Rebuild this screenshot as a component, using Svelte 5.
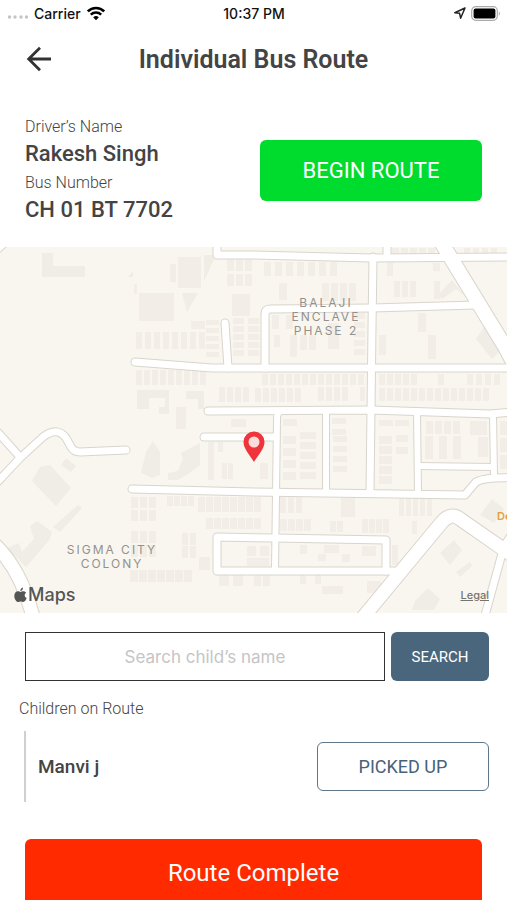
<script lang="ts">
  interface Child { id: number; name: string; pickedUp: boolean; }
  interface Road { d: string; w: number; }
  interface Block { x: number; y: number; w: number; h: number; cols?: number; dx?: number; rows?: number; dy?: number; }

  const driver = { name: 'Rakesh Singh', bus: 'CH 01 BT 7702' };

  let query = $state('');
  let started = $state(false);
  let children: Child[] = $state([{ id: 1, name: 'Manvi j', pickedUp: false }]);

  const roads: Road[] = [
    { d: 'M-6 6L4-3', w: 6 },
    { d: 'M217-6V8L253 8L372 11L512 10', w: 7 },
    { d: 'M387-6V10', w: 7 },
    { d: 'M373 10L372 80L370 246', w: 7 },
    { d: 'M265 121V67Q265 62 270 62L372 61L475 58', w: 7 },
    { d: 'M135 115L212 121H512', w: 7 },
    { d: 'M225 76L228 121', w: 7 },
    { d: 'M208 164L371 163L490 167L512 165', w: 7 },
    { d: 'M204 190H276', w: 7 },
    { d: 'M281 164Q277 165 277 172L275 323', w: 6 },
    { d: 'M326 164V245', w: 6 },
    { d: 'M417 165L418 247', w: 6 },
    { d: 'M493 167L494 229', w: 6 },
    { d: 'M418 219L493 220', w: 6 },
    { d: 'M132 242L254 245L465 248Q470 242 476 235Q485 230 512 231', w: 7 },
    { d: 'M217 290L275 291L386 293V324H217Z', w: 7 },
    { d: 'M386 324H400', w: 7 },
    { d: 'M-6 181L20 210', w: 7 },
    { d: 'M-8 241L20 211L43 190Q57 179 66 191L71 200Q74 205 80 205L126 203', w: 7 },
    { d: 'M-6 297Q22 323 34 374', w: 13 },
    { d: 'M438-10L504 98L518 124', w: 14 },
    { d: 'M360 374L442 275Q451 265 460 272L516 311', w: 13 },
    { d: 'M503 303L484 372', w: 7 },
    { d: 'M502 302L514 284', w: 7 },
  ];

  const blocks: Block[] = [
    { x: 178, y: 10, w: 23, h: 31 },
    { x: 170, y: 17, w: 6, h: 18 },
    { x: 139, y: 46, w: 35, h: 28 },
    { x: 227, y: 12, w: 7, h: 12, cols: 3, dx: 9, rows: 2, dy: 15 },
    { x: 232, y: 47, w: 18, h: 22 },
    { x: 191, y: 74, w: 14, h: 8 },
    { x: 134, y: 37, w: 3, h: 10 },
    { x: 206, y: 73, w: 13, h: 5, rows: 5, dy: 8 },
    { x: 233, y: 71, w: 11, h: 6, cols: 2, dx: 15, rows: 5, dy: 8 },
    { x: 136, y: 85, w: 6, h: 17, cols: 8, dx: 9 },
    { x: 136, y: 123, w: 6, h: 15, cols: 9, dx: 8 },
    { x: 219, y: 140, w: 6, h: 15, cols: 4, dx: 8 },
    { x: 176, y: 160, w: 10, h: 22 },
    { x: 231, y: 172, w: 15, h: 8 },
    { x: 264, y: 15, w: 7, h: 14, cols: 7, dx: 11 },
    { x: 279, y: 36, w: 8, h: 17 },
    { x: 322, y: 36, w: 7, h: 18, cols: 4, dx: 9 },
    { x: 272, y: 68, w: 7, h: 14, cols: 2, dx: 14 },
    { x: 274, y: 88, w: 6, h: 12 },
    { x: 290, y: 88, w: 7, h: 22 },
    { x: 300, y: 88, w: 7, h: 15, cols: 2, dx: 9 },
    { x: 328, y: 76, w: 11, h: 26 },
    { x: 354, y: 66, w: 11, h: 6, rows: 5, dy: 9 },
    { x: 387, y: 15, w: 6, h: 14 },
    { x: 394, y: 34, w: 6, h: 16, cols: 3, dx: 8 },
    { x: 433, y: 16, w: 7, h: 8 },
    { x: 434, y: 34, w: 6, h: 18 },
    { x: 379, y: 88, w: 7, h: 20 },
    { x: 418, y: 66, w: 8, h: 19 },
    { x: 428, y: 88, w: 8, h: 24 },
    { x: 392, y: 1, w: 7, h: 5, cols: 5, dx: 9 },
    { x: 464, y: 1, w: 6, h: 5, cols: 4, dx: 9 },
    { x: 262, y: 127, w: 6, h: 11, cols: 13, dx: 8 },
    { x: 255, y: 141, w: 6, h: 14, cols: 6, dx: 8 },
    { x: 318, y: 140, w: 6, h: 14, cols: 4, dx: 8 },
    { x: 360, y: 140, w: 5, h: 14 },
    { x: 379, y: 127, w: 6, h: 11, cols: 5, dx: 8 },
    { x: 379, y: 141, w: 6, h: 13, cols: 14, dx: 8 },
    { x: 438, y: 127, w: 6, h: 11 },
    { x: 467, y: 127, w: 6, h: 11, cols: 4, dx: 9 },
    { x: 283, y: 172, w: 14, h: 7 },
    { x: 332, y: 171, w: 14, h: 6, cols: 1, rows: 2, dy: 11 },
    { x: 379, y: 173, w: 14, h: 6, cols: 2, dx: 16 },
    { x: 426, y: 174, w: 7, h: 13, cols: 4, dx: 9 },
    { x: 470, y: 174, w: 17, h: 14 },
    { x: 500, y: 174, w: 8, h: 14, rows: 3, dy: 17 },
    { x: 425, y: 189, w: 8, h: 23, cols: 3, dx: 14 },
    { x: 478, y: 190, w: 10, h: 20 },
    { x: 283, y: 189, w: 13, h: 8, rows: 4, dy: 12 },
    { x: 300, y: 185, w: 16, h: 7, rows: 5, dy: 10 },
    { x: 333, y: 189, w: 14, h: 6, rows: 4, dy: 10 },
    { x: 379, y: 189, w: 13, h: 8, rows: 5, dy: 10 },
    { x: 396, y: 188, w: 12, h: 7, rows: 2, dy: 12 },
    { x: 222, y: 216, w: 5, h: 16, cols: 2, dx: 6 },
    { x: 208, y: 195, w: 6, h: 38 },
    { x: 218, y: 195, w: 5, h: 10 },
    { x: 260, y: 216, w: 8, h: 16 },
    { x: 131, y: 250, w: 7, h: 11, cols: 3, dx: 9, rows: 2, dy: 13 },
    { x: 167, y: 249, w: 6, h: 10, cols: 4, dx: 7 },
    { x: 198, y: 250, w: 7, h: 15, cols: 8, dx: 8 },
    { x: 206, y: 271, w: 7, h: 11, cols: 7, dx: 8 },
    { x: 131, y: 284, w: 7, h: 12, cols: 3, dx: 9, rows: 2, dy: 14 },
    { x: 182, y: 286, w: 6, h: 12, cols: 2, dx: 8, rows: 2, dy: 13 },
    { x: 130, y: 323, w: 8, h: 12, cols: 7, dx: 9 },
    { x: 199, y: 310, w: 11, h: 13 },
    { x: 219, y: 328, w: 10, h: 11, cols: 2, dx: 14 },
    { x: 280, y: 250, w: 6, h: 16, cols: 3, dx: 8 },
    { x: 341, y: 250, w: 14, h: 20 },
    { x: 399, y: 251, w: 5, h: 18, cols: 5, dx: 7 },
    { x: 280, y: 272, w: 7, h: 12, cols: 4, dx: 8 },
    { x: 330, y: 274, w: 6, h: 11, cols: 2, dx: 7 },
    { x: 362, y: 272, w: 6, h: 14, cols: 4, dx: 7 },
    { x: 412, y: 274, w: 5, h: 13 },
    { x: 247, y: 299, w: 9, h: 10, cols: 2, dx: 13 },
    { x: 247, y: 311, w: 22, h: 8 },
    { x: 300, y: 298, w: 7, h: 9 },
    { x: 324, y: 298, w: 15, h: 8 },
    { x: 318, y: 307, w: 8, h: 7 },
    { x: 342, y: 307, w: 8, h: 8 },
    { x: 362, y: 299, w: 14, h: 10 },
    { x: 392, y: 298, w: 6, h: 20 },
    { x: 254, y: 328, w: 7, h: 11, cols: 2, dx: 9 },
    { x: 300, y: 328, w: 6, h: 9, cols: 2, dx: 15 },
    { x: 322, y: 339, w: 21, h: 8 },
    { x: 367, y: 334, w: 14, h: 12 },
  ];

  // buildings that are not plain rectangles
  const shapes = [
    'M42 6H53V19H85V30H42Z',
    'M204 8H216L204 34Z',
    'M182 46H198L187 65Z',
    'M128 30L133 24V30Z',
    'M137 143H169V167H159V160H165V151H149V162H137Z',
    'M186 144H204V162H198V152H186Z',
    'M40 220L50 218L71 241L56 259L32 234Z',
    'M66 211L76 219L71 225L61 218Z',
    'M53 280L78 258L82 261L60 285Z',
    'M7 301L19 296L22 305L34 292L30 279L37 274L52 285L50 292L26 320L14 308Z',
    'M141 226L146 205L153 194L160 205V228L152 231Z',
    'M168 226L178 224L183 212L181 206L200 196V218L188 227L178 233H168Z',
    'M440 306L454 293L462 303L450 318Z',
    'M456 325L470 315L472 319L460 330Z',
    'M415 354L428 341L440 352L434 363H412Z',
    'M438 48L452 33L464 48L456 42L442 52Z',
    'M476 92L484 80L500 104L492 112Z',
    'M480 268L492 252L504 262L494 276Z',
  ];

  const lots = blocks.flatMap((b) =>
    Array.from({ length: (b.cols ?? 1) * (b.rows ?? 1) }, (_, i) => ({
      x: b.x + (i % (b.cols ?? 1)) * (b.dx ?? 0),
      y: b.y + Math.floor(i / (b.cols ?? 1)) * (b.dy ?? 0),
      w: b.w,
      h: b.h,
    }))
  );

  const visible = $derived(
    children.filter((c) => c.name.toLowerCase().includes(query.trim().toLowerCase()))
  );
</script>

<div class="status">
  <div class="carrier">
    <svg width="22" height="14" viewBox="0 0 22 14" aria-hidden="true">
      <g fill="#c4c4c4">
        <circle cx="2.500" cy="11" r="1.700" /><circle cx="8" cy="11" r="1.700" />
        <circle cx="14" cy="11" r="1.700" /><circle cx="19.500" cy="11" r="1.700" />
      </g>
    </svg>
    <span>Carrier</span>
    <svg class="wifi" width="20" height="15" viewBox="0 0 20 15" aria-hidden="true">
      <path d="M1.800 5.400A11.600 11.600 0 0 1 18.200 5.400" fill="none" stroke="#000" stroke-width="2.700" />
      <path d="M4.800 8.600A7.400 7.400 0 0 1 15.200 8.600" fill="none" stroke="#000" stroke-width="2.400" />
      <path d="M7.200 11.200A4.300 4.300 0 0 1 12.800 11.200L10 14.200Z" />
    </svg>
  </div>
  <span>10:37 PM</span>
  <div class="power">
    <svg width="14" height="14" viewBox="0 0 14 14" aria-hidden="true">
      <path d="M12 2L1.800 6.700L6.600 7.300L7.600 12.200Z" fill="none" stroke="#222" stroke-width="1.500" stroke-linejoin="round" />
    </svg>
    <svg width="30" height="15" viewBox="0 0 30 15" aria-hidden="true">
      <rect x="0.700" y="0.700" width="25.600" height="13.600" rx="4" fill="none" stroke="#aaa" stroke-width="1.200" />
      <rect x="2.600" y="2.600" width="21.800" height="9.800" rx="2" />
      <path d="M27.800 5.200Q30 7.500 27.800 9.800Z" fill="#aaa" />
    </svg>
  </div>
</div>

<header>
  <button class="back" aria-label="Back">
    <svg width="28" height="26" viewBox="0 0 28 26" aria-hidden="true">
      <path d="M26 13H4M15 1.800L3.700 13L15 24.200" fill="none" stroke="#333" stroke-width="2.800" />
    </svg>
  </button>
  <h1>Individual Bus Route</h1>
</header>

<section class="info">
  <dl>
    <div>
      <dt>Driver’s Name</dt>
      <dd>{driver.name}</dd>
    </div>
    <div>
      <dt>Bus Number</dt>
      <dd>{driver.bus}</dd>
    </div>
  </dl>
  <button class="begin" onclick={() => started = true} disabled={started}>BEGIN ROUTE</button>
</section>

<div class="map">
  <svg class="canvas" viewBox="0 0 507 366" preserveAspectRatio="xMidYMid slice" role="img" aria-label="Route map">
    <rect width="507" height="366" fill="#f9f6ef" />
    <g fill="#f0ece6">
      {#each shapes as d}
        <path {d} />
      {/each}
    </g>
    <g fill="#f2eee7">
      {#each lots as lot}
        <rect x={lot.x} y={lot.y} width={lot.w} height={lot.h} />
      {/each}
    </g>
    <g fill="none" stroke="#d9d5cd" stroke-linecap="round" stroke-linejoin="round">
      {#each roads as road}
        <path d={road.d} stroke-width={road.w + 2} />
      {/each}
    </g>
    <g fill="none" stroke="#fff" stroke-linecap="round" stroke-linejoin="round">
      {#each roads as road}
        <path d={road.d} stroke-width={road.w} />
      {/each}
    </g>
    <g class="place">
      <text x="326" y="60">BALAJI</text>
      <text x="326" y="74">ENCLAVE</text>
      <text x="326" y="88">PHASE 2</text>
      <text x="112" y="307">SIGMA CITY</text>
      <text x="112" y="321">COLONY</text>
    </g>
    <text class="poi" x="497" y="273">Do</text>
    <path d="M254 215C250 208 243.500 202 243.500 195A10.500 10.500 0 0 1 264.500 195C264.500 202 258 208 254 215Z" fill="#ef343c" />
    <circle cx="254" cy="195" r="5.500" fill="#fbdcdb" />
  </svg>
  <div class="credit">
    <svg width="13" height="16" viewBox="0 0 13 16" aria-hidden="true">
      <path d="M9 0.500C9.100 2.400 7.900 3.900 6.300 4C6.200 2.300 7.400 0.800 9 0.500ZM6.500 4.900C7.200 4.900 8 4.200 9.300 4.200C10.500 4.200 11.600 4.800 12.200 5.700C10 7 10.300 10 12.700 11C12.100 12.700 10.800 15 9.300 15C8.300 15 7.900 14.400 6.700 14.400C5.500 14.400 5 15 4.200 15C2.300 15 0.300 11.700 0.300 8.900C0.300 6 2 4.300 4 4.300C5.100 4.300 5.900 4.900 6.500 4.900Z" fill="#555" />
    </svg>
    <span>Maps</span>
  </div>
  <a class="legal" href="#legal">Legal</a>
</div>

<form class="search" onsubmit={(e) => e.preventDefault()}>
  <input type="text" bind:value={query} placeholder="Search child’s name" aria-label="Search child’s name" />
  <button type="submit">SEARCH</button>
</form>

<section class="route">
  <h2>Children on Route</h2>
  <ul>
    {#each visible as child (child.id)}
      <li>
        <span>{child.name}</span>
        <button onclick={() => child.pickedUp = true} disabled={child.pickedUp}>PICKED UP</button>
      </li>
    {/each}
  </ul>
</section>

<div class="finish">
  <button>Route Complete</button>
</div>

<style>
  :global(body) {
    background: #fff;
    color: #444;
    font-family: Roboto, "Liberation Sans", sans-serif;
  }

  button {
    padding: 0;
    border: none;
    border-radius: 6px;
    font-family: inherit;
    cursor: pointer;
  }

  .status {
    display: grid;
    grid-template-columns: 1fr auto 1fr;
    align-items: center;
    height: 26px;
    padding: 0 6px 0 7px;
    color: #111;
    font-family: Inter, "Liberation Sans", sans-serif;
    font-size: 14px;
    font-weight: 500;
  }

  .carrier {
    display: flex;
    align-items: center;
    gap: 5px;
  }

  .power {
    display: flex;
    align-items: center;
    justify-content: flex-end;
    gap: 4px;
  }

  header {
    display: grid;
    grid-template-columns: 1fr auto 1fr;
    align-items: center;
    height: 66px;
    padding: 0 25px;
  }

  .back {
    width: 28px;
    height: 26px;
    background: none;
  }

  .back svg { display: block; }

  h1 {
    margin: 0;
    font-size: 25px;
    font-weight: 600;
  }

  .info {
    display: flex;
    align-items: center;
    justify-content: space-between;
    padding: 23px 25px 22px;
  }

  dl {
    display: flex;
    flex-direction: column;
    gap: 2px;
    margin: 0;
  }

  dt {
    font-size: 16px;
    font-weight: 300;
    line-height: 24px;
  }

  dd {
    margin: 0;
    font-size: 22px;
    font-weight: 500;
    line-height: 30px;
  }

  .begin {
    width: 222px;
    height: 61px;
    background: #00dc2e;
    color: #fff;
    font-size: 22px;
  }

  .map {
    position: relative;
    height: 366px;
    overflow: hidden;
  }

  .canvas {
    display: block;
    width: 100%;
    height: 100%;
  }

  .place {
    fill: #93918e;
    font-family: Inter, sans-serif;
    font-size: 12px;
    font-weight: 400;
    letter-spacing: 2px;
    text-anchor: middle;
  }

  .poi {
    fill: #e5a040;
    font-family: Inter, sans-serif;
    font-size: 11px;
    font-weight: 600;
  }

  .credit {
    position: absolute;
    left: 14px;
    bottom: 8px;
    display: flex;
    align-items: center;
    gap: 1px;
    color: #555;
    font-family: Inter, sans-serif;
    font-size: 18px;
    font-weight: 500;
  }

  .legal {
    position: absolute;
    right: 18px;
    bottom: 11px;
    color: #77746f;
    font-family: Inter, sans-serif;
    font-size: 11px;
    font-weight: 500;
  }

  .search {
    display: flex;
    gap: 6px;
    padding: 19px 18px 0 25px;
  }

  .search input {
    flex: 1;
    min-width: 0;
    height: 49px;
    box-sizing: border-box;
    padding: 0 12px;
    border: 1px solid #333;
    border-radius: 0;
    background: #fff;
    color: #444;
    font-family: Inter, sans-serif;
    font-size: 17px;
    text-align: center;
  }

  .search input::placeholder { color: #c5c5c7; }

  .search button {
    width: 98px;
    height: 49px;
    background: #4a667c;
    color: #fff;
    font-size: 15px;
  }

  h2 {
    margin: 0;
    padding: 16px 19px 10px;
    color: #444;
    font-size: 16px;
    font-weight: 300;
    line-height: 24px;
  }

  ul {
    margin: 0;
    padding: 0 18px 0 24px;
    list-style: none;
  }

  li {
    display: flex;
    align-items: center;
    justify-content: space-between;
    height: 71px;
    padding-left: 12px;
    border-left: 2px solid #d0d0d0;
    font-size: 19px;
    font-weight: 500;
  }

  li button {
    width: 172px;
    height: 49px;
    border: 1px solid #5f7588;
    background: #fff;
    color: #48627a;
    font-size: 18px;
  }

  .finish { padding: 37px 25px 0; }

  .finish button {
    width: 100%;
    height: 68px;
    background: #ff2a00;
    color: #fff;
    font-size: 24px;
  }

  .begin:disabled, li button:disabled { opacity: 0.5; }
</style>
